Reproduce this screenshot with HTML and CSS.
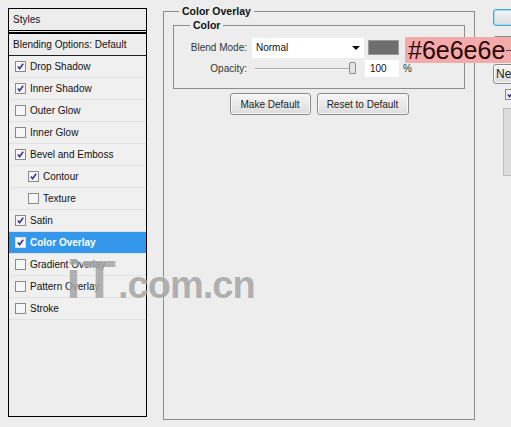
FILE: index.html
```html
<!DOCTYPE html>
<html>

<head>
    <meta charset="UTF-8">
    <title>Layer Style - Color Overlay</title>
    <link rel="stylesheet" href="styles.css">
</head>

<body>
    <div class="dialog">
        <div class="styles-panel">
            <div class="panel-head">Styles</div>
            <div class="panel-blend">Blending Options: Default</div>
            <ul class="style-list">
                <li class="style-item"><span class="check on"><svg viewBox="0 0 9 9"><path d="M1.8 4.4 L3.6 6.6 L7.2 1.8" /></svg></span>Drop Shadow</li>
                <li class="style-item"><span class="check on"><svg viewBox="0 0 9 9"><path d="M1.8 4.4 L3.6 6.6 L7.2 1.8" /></svg></span>Inner Shadow</li>
                <li class="style-item"><span class="check"></span>Outer Glow</li>
                <li class="style-item"><span class="check"></span>Inner Glow</li>
                <li class="style-item"><span class="check on"><svg viewBox="0 0 9 9"><path d="M1.8 4.4 L3.6 6.6 L7.2 1.8" /></svg></span>Bevel and Emboss</li>
                <li class="style-item sub"><span class="check on"><svg viewBox="0 0 9 9"><path d="M1.8 4.4 L3.6 6.6 L7.2 1.8" /></svg></span>Contour</li>
                <li class="style-item sub"><span class="check"></span>Texture</li>
                <li class="style-item"><span class="check on"><svg viewBox="0 0 9 9"><path d="M1.8 4.4 L3.6 6.6 L7.2 1.8" /></svg></span>Satin</li>
                <li class="style-item active"><span class="check on"><svg viewBox="0 0 9 9"><path d="M1.8 4.4 L3.6 6.6 L7.2 1.8" /></svg></span>Color Overlay</li>
                <li class="style-item"><span class="check"></span>Gradient Overlay</li>
                <li class="style-item"><span class="check"></span>Pattern Overlay</li>
                <li class="style-item"><span class="check"></span>Stroke</li>
            </ul>
        </div>

        <div class="main">
            <fieldset class="group">
                <legend>Color Overlay</legend>
                <fieldset class="group inner">
                    <legend>Color</legend>
                    <div class="field-row">
                        <span class="field-label">Blend Mode:</span>
                        <div class="select">Normal<span class="arrow"></span></div>
                        <span class="swatch"></span>
                    </div>
                    <div class="field-row">
                        <span class="field-label">Opacity:</span>
                        <div class="slider"><span class="thumb"></span></div>
                        <div class="num">100</div>
                        <span class="unit">%</span>
                    </div>
                </fieldset>
                <div class="button-row">
                    <button class="btn make">Make Default</button>
                    <button class="btn reset">Reset to Default</button>
                </div>
            </fieldset>
        </div>

        <div class="side">
            <button class="btn side-btn ok">OK</button>
            <button class="btn side-btn cancel">Cancel</button>
            <button class="btn side-btn new">New Style...</button>
            <div class="preview-row"><span class="check on"><svg viewBox="0 0 9 9"><path d="M1.8 4.4 L3.6 6.6 L7.2 1.8" /></svg></span>Preview</div>
            <div class="preview-box"></div>
        </div>
    </div>

    <div class="annotation">#6e6e6e</div>
    <div class="watermark"><span class="wm-big">iT</span><span class="wm-small">.com.cn</span></div>
</body>

</html>
```

FILE: styles.css
```css
body {
    font-family: "Liberation Sans", Arial, sans-serif;
    font-size: 10px;
    margin: 0;
    width: 511px;
    height: 427px;
    overflow: hidden;
    background-color: #ededed;
    color: #111;
    position: relative;
}

.dialog {
    display: flex;
    align-items: flex-start;
    padding: 8px 0 0 8px;
}

/* left list of styles */
.styles-panel {
    width: 139px;
    height: 409px;
    box-sizing: border-box;
    border: 1px solid #000;
    flex-shrink: 0;
}

.panel-head {
    height: 21px;
    line-height: 21px;
    padding-left: 4px;
    border-bottom: 1px solid #000;
}

.panel-blend {
    margin-top: 1px;
    height: 21px;
    line-height: 21px;
    padding-left: 4px;
    border-top: 2px solid #000;
    border-bottom: 1px solid #222;
}

.style-list {
    list-style: none;
    margin: 0;
    padding: 0;
}

.style-item {
    display: flex;
    align-items: center;
    gap: 4px;
    height: 21px;
    padding-left: 6px;
    border-bottom: 1px solid #e2e2e2;
    background-color: #f0f0f0;
}

.style-item.sub {
    padding-left: 19px;
}

.style-item.active {
    background-color: #3398ec;
    color: #fff;
    font-weight: bold;
}

.check {
    width: 9px;
    height: 9px;
    border: 1px solid #8a8a8a;
    background-color: #f6f6f6;
    flex-shrink: 0;
    display: flex;
}

.check svg {
    width: 9px;
    height: 9px;
}

.check svg path {
    fill: none;
    stroke: #3c3c94;
    stroke-width: 1.6;
}

.active .check {
    border-color: #ddd;
}

/* main settings area */
.main {
    margin-left: 16px;
    width: 312px;
    flex-shrink: 0;
}

.group {
    margin: 0;
    padding: 0 9px;
    min-width: 0;
    border: 1px solid #8c8c8c;
    height: 415px;
    box-sizing: border-box;
    margin-top: -3px;
}

.group legend {
    font-size: 10.5px;
    font-weight: bold;
    padding: 0 3px;
    margin-left: 6px;
}

.group.inner {
    height: 70px;
    margin-top: 2px;
    padding: 6px 9px 0;
}

.group.inner legend {
    margin-left: 7px;
}

.field-row {
    display: flex;
    align-items: center;
    height: 21px;
}

.field-row + .field-row {
    margin-top: 2px;
    height: 17px;
}

.field-label {
    width: 64px;
    text-align: right;
    color: #333;
}

.select {
    margin-left: 5px;
    width: 112px;
    height: 20px;
    box-sizing: border-box;
    background-color: #fff;
    padding-left: 4px;
    line-height: 20px;
    position: relative;
}

.arrow {
    position: absolute;
    right: 4px;
    top: 8px;
    border-left: 4px solid transparent;
    border-right: 4px solid transparent;
    border-top: 4px solid #111;
}

.swatch {
    margin-left: 4px;
    width: 31px;
    height: 15px;
    background-color: #6e6e6e;
    border: 1px solid #999;
    box-sizing: border-box;
}

.slider {
    margin-left: 8px;
    width: 102px;
    height: 15px;
    position: relative;
}

.slider::before {
    content: "";
    position: absolute;
    left: 0;
    right: 8px;
    top: 7px;
    height: 1px;
    background-color: #a6a6a6;
    border-bottom: 1px solid #fafafa;
}

.thumb {
    position: absolute;
    right: 1px;
    top: 1px;
    width: 7px;
    height: 12px;
    box-sizing: border-box;
    border: 1px solid #8f8f8f;
    border-radius: 2px 2px 1px 1px;
    background-color: #e4e4e4;
}

.num {
    margin-left: 8px;
    width: 34px;
    height: 17px;
    line-height: 17px;
    box-sizing: border-box;
    background-color: #fff;
    padding-left: 5px;
}

.unit {
    margin-left: 4px;
    color: #333;
}

.button-row {
    display: flex;
    justify-content: center;
    gap: 6px;
    margin-top: 4px;
}

.btn {
    font-family: inherit;
    font-size: 10px;
    color: #222;
    height: 22px;
    padding: 0;
    border: 1px solid #8a8a8a;
    border-radius: 3px;
    background: linear-gradient(#f6f6f6, #dcdcdc);
    box-shadow: inset 0 0 0 1px #fafafa;
}

.btn.make {
    width: 81px;
}

.btn.reset {
    width: 92px;
}

/* right column, cut by the window edge */
.side {
    margin-left: 18px;
    display: flex;
    flex-direction: column;
    flex-shrink: 0;
    width: 80px;
}

.side-btn {
    width: 80px;
    height: 17px;
    text-align: left;
    padding-left: 4px;
    margin-top: 1px;
    font-size: 12px;
}

.side-btn.ok {
    border-color: #4aa9c8;
    box-shadow: inset 0 0 0 1px #9fdcf0;
    color: transparent;
}

.side-btn.cancel {
    margin-top: 10px;
    height: 20px;
}

.side-btn.new {
    margin-top: 8px;
    height: 20px;
    padding-left: 2px;
}

.preview-row {
    display: flex;
    align-items: center;
    gap: 4px;
    margin: 5px 0 0 12px;
}

.preview-box {
    margin: 8px 0 0 10px;
    height: 66px;
    border: 1px solid #bbb;
    background-color: #dcdcdc;
}

/* overlays on top of the screenshot */
.annotation {
    position: absolute;
    left: 405px;
    top: 37px;
    width: 120px;
    height: 26px;
    line-height: 27px;
    padding-left: 3px;
    background-color: #f3aaaa;
    color: #2a0505;
    font-family: "Liberation Sans", Arial, sans-serif;
    font-size: 25px;
}

.annotation::after {
    content: "";
    position: absolute;
    left: 101px;
    top: 13px;
    width: 20px;
    height: 1px;
    background-color: #6a3a3a;
}

.watermark {
    position: absolute;
    left: 66px;
    top: 248px;
    color: #a5a5a5;
    font-family: "Liberation Sans", Arial, sans-serif;
    font-weight: bold;
    text-shadow: 0 0 2px #fff;
    opacity: 0.85;
    white-space: nowrap;
}

.wm-big {
    font-size: 54px;
    letter-spacing: 2px;
}

.wm-small {
    font-size: 38px;
    letter-spacing: -1px;
}
```
